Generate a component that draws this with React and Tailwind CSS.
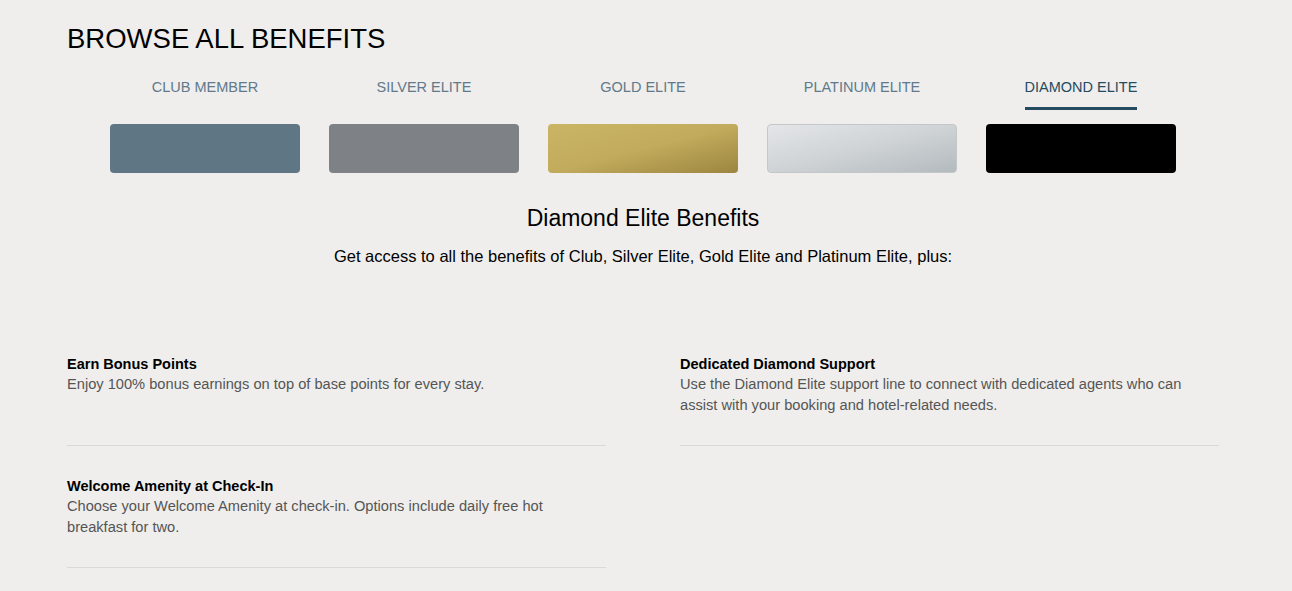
const tiers = [
  { name: "CLUB MEMBER", card: "bg-[#5f7784]" },
  { name: "SILVER ELITE", card: "bg-[#7e8286]" },
  { name: "GOLD ELITE", card: "bg-gradient-to-br from-[#cab565] via-[#c2ab5c] to-[#9c8640]" },
  { name: "PLATINUM ELITE", card: "bg-gradient-to-br from-[#e4e6e8] via-[#cfd3d6] to-[#b3babe] border border-[#c3c7ca]" },
  { name: "DIAMOND ELITE", card: "bg-black", active: true },
];

const benefits = [
  {
    title: "Earn Bonus Points",
    text: "Enjoy 100% bonus earnings on top of base points for every stay.",
  },
  {
    title: "Dedicated Diamond Support",
    text: "Use the Diamond Elite support line to connect with dedicated agents who can assist with your booking and hotel-related needs.",
  },
  {
    title: "Welcome Amenity at Check-In",
    text: "Choose your Welcome Amenity at check-in. Options include daily free hot breakfast for two.",
  },
];

export default function App() {
  return (
    <div className="min-h-screen bg-[#efeeec] pl-[67px] pr-[73px] pt-[22px] font-['Liberation_Sans',Arial,sans-serif]">
      <h1 className="text-[27.5px] leading-[34px] text-black">BROWSE ALL BENEFITS</h1>

      {/* Tier tabs */}
      <div className="mt-[21px] flex justify-center gap-[29px]">
        {tiers.map((t) => (
          <div key={t.name} className="flex w-[190px] flex-col items-center">
            <div className="flex flex-col items-center">
              <span
                className={
                  "text-[14.5px] leading-[20px] " +
                  (t.active ? "text-[#244b5f]" : "text-[#61798a]")
                }
              >
                {t.name}
              </span>
              <div
                className={
                  "mt-[10px] h-[3px] w-full " + (t.active ? "bg-[#244b5f]" : "bg-transparent")
                }
              />
            </div>
            <div className={"mt-[14px] h-[49px] w-full rounded-[4px] " + t.card} />
          </div>
        ))}
      </div>

      <h2 className="mt-[30px] text-center text-[23px] leading-[30px] text-black">
        Diamond Elite Benefits
      </h2>
      <p className="mt-[12px] text-center text-[16.5px] leading-[22px] text-black">
        Get access to all the benefits of Club, Silver Elite, Gold Elite and Platinum Elite, plus:
      </p>

      {/* Benefit list */}
      <div className="mt-[57px] grid grid-cols-2 gap-x-[74px]">
        {benefits.map((b) => (
          <div key={b.title} className="border-b border-[#d9d9d9] pt-[31px] pb-[29px]">
            <h3 className="text-[14.5px] font-bold leading-[19px] text-black">{b.title}</h3>
            <p className="pr-[10px] text-[14.65px] leading-[21px] text-[#555555]">{b.text}</p>
          </div>
        ))}
      </div>
    </div>
  );
}
